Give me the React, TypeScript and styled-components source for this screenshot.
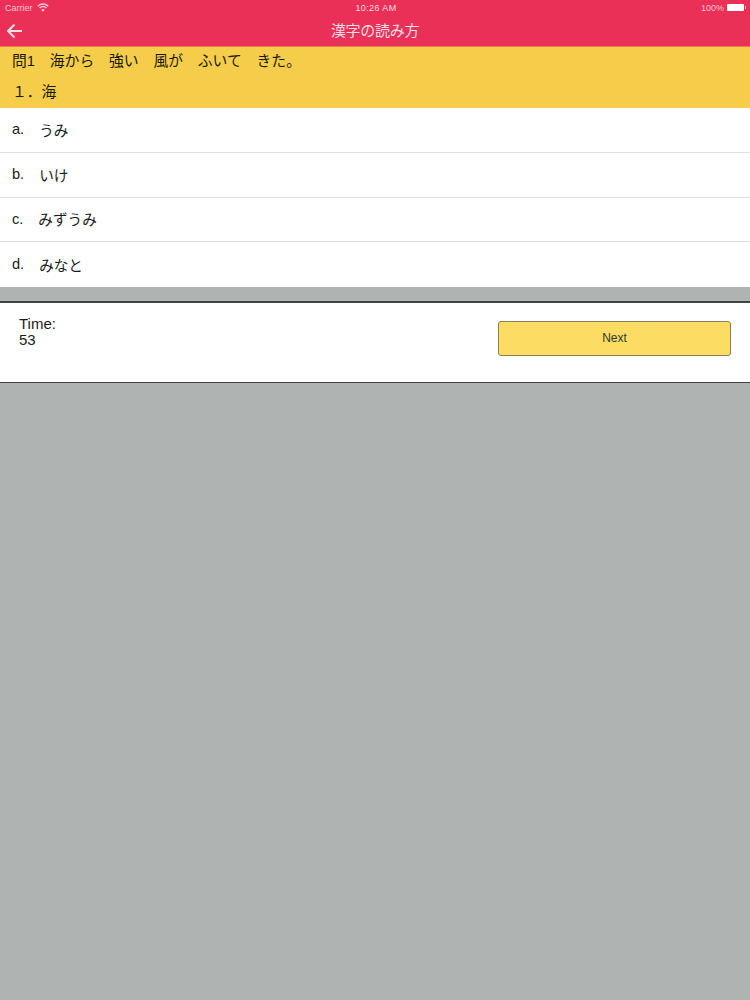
import styled, { createGlobalStyle } from "styled-components";

const GlobalStyle = createGlobalStyle`
  html, body {
    margin: 0;
    padding: 0;
    background: #afb3b1;
    font-family: "Liberation Sans", "Noto Sans CJK JP", sans-serif;
  }
  * { box-sizing: border-box; }
`;

const OPTIONS = [
  { label: "a.", text: "うみ" },
  { label: "b.", text: "いけ" },
  { label: "c.", text: "みずうみ" },
  { label: "d.", text: "みなと" },
];

export default function App() {
  return (
    <Page>
      <GlobalStyle />
      <Header>
        <StatusBar>
          <StatusLeft>
            Carrier
            <svg width="12" height="9" viewBox="0 0 12 9" fill="none" stroke="#f9c6d2" strokeWidth="1.5">
              <path d="M.8 3.2a7.4 7.4 0 0 1 10.4 0" />
              <path d="M2.6 5a4.8 4.8 0 0 1 6.8 0" />
              <path d="M6 8.8 4.2 6.8a2.6 2.6 0 0 1 3.6 0Z" fill="#f9c6d2" stroke="none" />
            </svg>
          </StatusLeft>
          <StatusTime>10:26 AM</StatusTime>
          <StatusRight>
            100%
            <Battery />
          </StatusRight>
        </StatusBar>
        <NavBar>
          <BackIcon width="17" height="16" viewBox="0 0 17 16" fill="none" stroke="#fbdde4" strokeWidth="2">
            <path d="M16 8H2M8.5 1.5 2 8l6.5 6.5" />
          </BackIcon>
          <NavTitle>漢字の読み方</NavTitle>
        </NavBar>
      </Header>
      <Question>
        <QuestionLine>問1　海から　強い　風が　ふいて　きた。</QuestionLine>
        <SubLine>１．海</SubLine>
      </Question>
      <OptionList>
        {OPTIONS.map((o) => (
          <OptionRow key={o.label}>
            <OptionLabel>{o.label}</OptionLabel>
            {o.text}
          </OptionRow>
        ))}
      </OptionList>
      <Footer>
        <TimeBlock>
          Time:
          <br />
          53
        </TimeBlock>
        <NextButton>Next</NextButton>
      </Footer>
    </Page>
  );
}

const Page = styled.div`
  width: 750px;
  height: 1000px;
  overflow: hidden;
  background: #afb3b1;
`;

const Header = styled.header`
  height: 47px;
  background: #ea3056;
  border-bottom: 1px solid #ef7a50;
`;

const StatusBar = styled.div`
  display: grid;
  grid-template-columns: 1fr auto 1fr;
  align-items: center;
  height: 15px;
  padding: 0 4px 0 5px;
  font-size: 9px;
  color: #f9c6d2;
`;

const StatusLeft = styled.div`
  display: flex;
  align-items: center;
  gap: 4px;
`;

const StatusTime = styled.div`
  margin-left: 1px;
  color: #fbdde4;
  letter-spacing: 0.4px;
`;

const StatusRight = styled.div`
  display: flex;
  align-items: center;
  justify-content: flex-end;
  gap: 3px;
`;

const Battery = styled.span`
  position: relative;
  width: 17px;
  height: 7px;
  margin-right: 2px;
  border-radius: 1px;
  background: #ffffff;

  &::after {
    content: "";
    position: absolute;
    top: 2px;
    right: -2px;
    width: 1px;
    height: 3px;
    background: #f9c6d2;
  }
`;

const NavBar = styled.div`
  position: relative;
  display: flex;
  align-items: center;
  justify-content: center;
  height: 31px;
  padding-bottom: 2px;
`;

const BackIcon = styled.svg`
  position: absolute;
  left: 6px;
  top: 8px;
`;

const NavTitle = styled.div`
  font-size: 15px;
  color: #fbdde4;
  letter-spacing: -0.3px;
`;

const Question = styled.section`
  height: 61.4px;
  padding: 5px 12px 0;
  background: #f5cd4b;
  color: #1d1a10;
`;

const QuestionLine = styled.div`
  font-size: 14.8px;
  line-height: 19px;
`;

const SubLine = styled.div`
  margin-top: 12px;
  font-size: 14.8px;
  line-height: 19px;
`;

const OptionList = styled.div`
  background: #ffffff;
`;

const OptionRow = styled.div`
  display: flex;
  align-items: center;
  height: 44.7px;
  padding: 0 0 1.5px 12px;
  font-size: 14.6px;
  color: #1a1a1a;
  border-bottom: 1px solid #dedede;

  &:last-child {
    border-bottom: none;
  }
`;

const OptionLabel = styled.span`
  margin-right: 15px;
`;

const Footer = styled.div`
  display: flex;
  justify-content: space-between;
  align-items: flex-start;
  height: 82px;
  margin-top: 13.6px;
  padding: 13px 19px 0;
  background: #ffffff;
  border-top: 2px solid #3f4241;
  border-bottom: 1px solid #3f4241;
`;

const TimeBlock = styled.div`
  font-size: 15px;
  line-height: 16px;
  color: #1c1c1c;
`;

const NextButton = styled.button`
  width: 233px;
  height: 35px;
  margin-top: 5px;
  padding: 0;
  font-family: inherit;
  font-size: 12px;
  color: #2e3a30;
  background: #fddc63;
  border: 1px solid #86815a;
  border-radius: 3px;
`;
